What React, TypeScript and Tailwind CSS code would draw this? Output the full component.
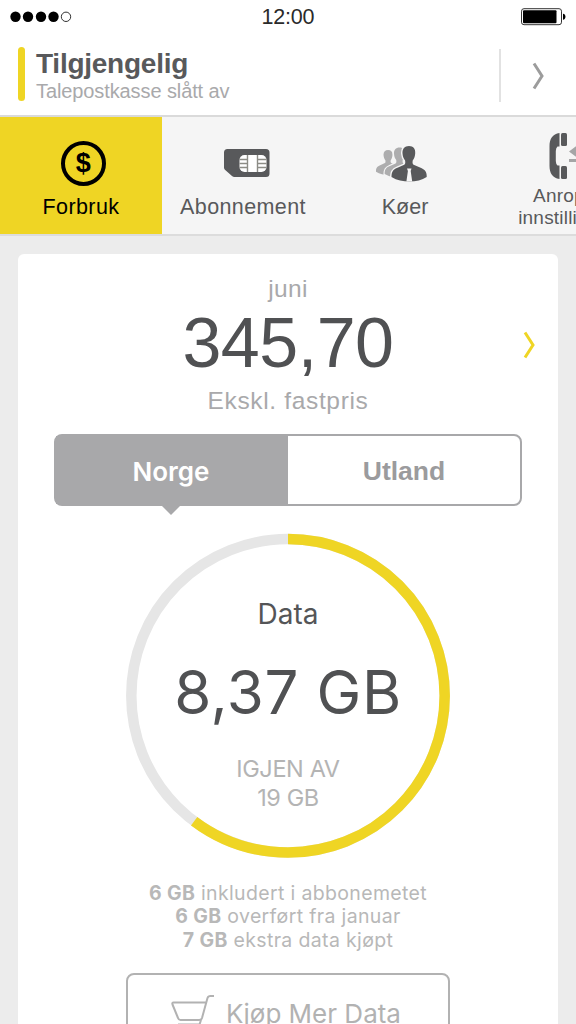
/* Type Imports */
import type { JSX, ReactNode } from "react";

type Allowance = { amount: string; text: string };

const allowances: Allowance[] = [
  { amount: "6 GB", text: "inkludert i abbonemetet" },
  { amount: "6 GB", text: "overført fra januar" },
  { amount: "7 GB", text: "ekstra data kjøpt" },
];

/*
 * StatusBar
 *
 * Signal dots, clock and battery.
 * */
const StatusBar = (): JSX.Element => {
  return (
    <div className="grid h-[34px] grid-cols-3 items-center pl-[10px] pr-[10px]">
      <svg width="64" height="12" viewBox="0 0 64 12">
        {[5.5, 18, 31, 43.5].map((cx) => (
          <circle key={cx} cx={cx} cy="5.800" r="5.2" fill="#000" />
        ))}
        <circle cx="56" cy="5.800" r="4.7" fill="none" stroke="#333" />
      </svg>
      <span className="text-center text-[21.5px] leading-[34px] tracking-[-0.2px] text-[#2a2a2a]">
        12:00
      </span>
      <svg
        className="justify-self-end"
        width="46"
        height="18"
        viewBox="0 0 46 18"
      >
        <rect x="1.5" y="0.700" width="40" height="16" rx="2.5" fill="none" stroke="#333" />
        <rect x="3" y="2.200" width="33.5" height="13" rx="1" fill="#000" />
        <path d="M43 5.700c1.600 0 2.500 1.500 2.500 3s-.9 3-2.500 3z" fill="#000" />
      </svg>
    </div>
  );
};

/*
 * Chevron
 *
 * @param {string} className - The stroke colour and spacing classes.
 * */
const Chevron = ({ className }: { className: string }): JSX.Element => {
  return (
    <svg
      className={className}
      width="14"
      height="28"
      viewBox="0 0 14 28"
      fill="none"
      stroke="currentColor"
      strokeWidth="3"
    >
      <path d="M2 1.500 10 14 2 26.500" />
    </svg>
  );
};

const Header = (): JSX.Element => {
  return (
    <header className="flex h-[83px] border-b-2 border-[#dadada]">
      <div className="mt-[13px] ml-[18px] h-[54px] w-[7px] rounded-full bg-[#efd524]" />
      <div className="ml-[11px] flex-1 pt-[15px]">
        <h1 className="text-[28px] leading-[30px] font-bold tracking-[-0.25px] text-[#58595b]">
          Tilgjengelig
        </h1>
        <p className="mt-[-1px] text-[20px] leading-[26px] tracking-[-0.1px] text-[#a9a9ab]">
          Talepostkasse slått av
        </p>
      </div>
      <div className="mt-[15px] flex h-[53px] w-[77px] items-center justify-center border-l-2 border-[#e2e2e2]">
        <Chevron className="text-[#9c9c9c]" />
      </div>
    </header>
  );
};

/* Icons */
const CoinIcon = (): JSX.Element => {
  return (
    <div className="ml-[5px] flex size-[45px] items-center justify-center rounded-full border-[4.5px] border-black text-[27px] leading-none font-bold">
      $
    </div>
  );
};

const SimIcon = (): JSX.Element => {
  return (
    <svg className="ml-[7px]" width="46" height="28" viewBox="0 0 46 28">
      <path
        d="M3.500 0h38.500a3.500 3.500 0 0 1 3.500 3.500v21a3.500 3.500 0 0 1-3.500 3.500H10.500Q9 28 8 27L1.200 21Q0 20 0 18.500v-15A3.500 3.500 0 0 1 3.500 0z"
        fill="#58595b"
      />
      <rect x="15.500" y="6" width="27" height="17" rx="5" fill="#fff" />
      <path
        d="M23.500 6v17M33.500 6v17M15.500 10.500h8M15.500 14.500h8M15.500 18.500h8M33.500 10.500h9M33.500 14.500h9M33.500 18.500h9"
        stroke="#8c8c86"
        strokeWidth="1.400"
      />
    </svg>
  );
};

const person =
  "M33 1c4.500 0 6.700 3 6.200 7.500-.3 3.500-1 5-2.500 7-.4 2.500-.1 3.800 1.500 4.600l7 3c3.800 1.600 5.800 4.400 5.500 8.900C46 35 40 36.500 33.500 36.500S21 35.500 15.500 32c-.1-5 1.900-7.500 5.400-8.900l6.800-3c1.600-.8 1.800-2.100 1.400-4.600-1.500-2-2.300-3.500-2.600-7C26.100 4 28.500 1 33 1z";

/* Two grey people standing behind a dark one, each cut out with a light edge */
const QueueIcon = (): JSX.Element => {
  return (
    <svg
      className="mt-[1px] ml-[-6px]"
      width="52"
      height="38"
      viewBox="0 0 52 38"
      stroke="#f5f5f5"
      strokeWidth="3"
      paintOrder="stroke"
    >
      <path d={person} fill="#adadae" transform="translate(-11 4.300) scale(.7)" />
      <path d={person} fill="#adadae" transform="translate(-4.500 1.700) scale(.85)" />
      <path d={person} fill="#58595b" />
      <path
        d="M31 23.500h4.500l-.8 2.500L36.200 36.500h-5.800l1.500-10.500z"
        fill="#f5f5f5"
        stroke="none"
      />
    </svg>
  );
};

const CallIcon = (): JSX.Element => {
  return (
    <svg className="mt-[-14px] shrink-0" width="36" height="46" viewBox="0 0 36 46">
      <g fill="#58595b">
        <path d="M10.500 0v13.500H8.500Q7 14.500 6.800 18v10q.2 3.500 1.700 4.500h2V46C3.500 45 .5 40 .5 33V13C.5 6 3.500 1 10.500 0z" />
        <rect x="12" y="0" width="6" height="13" rx="1.500" />
        <rect x="12" y="33" width="6" height="13" rx="1.500" />
      </g>
      <path d="M20 18.500 30 11v5h6v5h-6v5zM20 26h16v3H20z" fill="#a5a5a6" />
    </svg>
  );
};

/*
 * Tab
 *
 * One entry in the horizontally scrolled tab strip.
 *
 * @param {ReactNode} icon - The drawing above the label.
 * @param {boolean} active - Whether the tab is the selected one.
 * */
const Tab = ({
  icon,
  active = false,
  children,
}: {
  icon: ReactNode;
  active?: boolean;
  children: ReactNode;
}): JSX.Element => {
  return (
    <button
      className={`flex w-[162px] shrink-0 flex-col items-center pt-[23px] text-[21.5px] leading-[28px] tracking-[0.4px] ${
        active ? "bg-[#efd524] text-black" : "text-[#58595b]"
      }`}
    >
      <span className="flex h-[46px] items-center">{icon}</span>
      {children}
    </button>
  );
};

const Tabs = (): JSX.Element => {
  return (
    <nav className="flex h-[119px] overflow-hidden border-b-2 border-[#dcdcdc] bg-[#f5f5f5]">
      <Tab icon={<CoinIcon />} active>
        <span className="mt-[7px]">Forbruk</span>
      </Tab>
      <Tab icon={<SimIcon />}>
        <span className="mt-[7px]">Abonnement</span>
      </Tab>
      <Tab icon={<QueueIcon />}>
        <span className="mt-[7px] tracking-normal">Køer</span>
      </Tab>
      <Tab icon={<CallIcon />}>
        <span className="mt-[-1px] text-center text-[19px] leading-[22px] tracking-[0.2px]">
          Anrops-
          <br />
          innstillinger
        </span>
      </Tab>
    </nav>
  );
};

/*
 * UsageRing
 *
 * Circular gauge with the remaining data in the middle.
 *
 * @param {number} share - The filled part of the ring, from 0 to 1.
 * */
const UsageRing = ({ share }: { share: number }): JSX.Element => {
  const length = 2 * Math.PI * 156.7;

  return (
    <div className="mt-[27px] grid h-[325px] w-[324px] font-['Inter',sans-serif]">
      <svg
        className="col-start-1 row-start-1"
        width="324"
        height="325"
        viewBox="0 0 324 325"
        fill="none"
        strokeWidth="10.500"
      >
        <circle cx="162" cy="162.800" r="156.700" stroke="#e6e6e6" />
        <circle
          cx="162"
          cy="162.800"
          r="156.700"
          stroke="#efd524"
          strokeDasharray={`${length * share} ${length}`}
          transform="rotate(-90 162 162.800)"
        />
      </svg>
      <div className="col-start-1 row-start-1 flex flex-col items-center pt-[61px]">
        <span className="text-[28px] leading-[40px] text-[#545557]">Data</span>
        <span className="text-[60px] leading-[116px] tracking-[0.6px] text-[#505153]">
          8,37 GB
        </span>
        <span className="mt-1 text-center text-[23.5px] leading-[29px] tracking-[-0.4px] text-[#b4b4b4]">
          IGJEN AV
          <br />
          19 GB
        </span>
      </div>
    </div>
  );
};

const CartIcon = (): JSX.Element => {
  return (
    <svg
      width="44"
      height="40"
      viewBox="0 0 44 40"
      fill="none"
      stroke="#b2b2b2"
      strokeWidth="2"
      strokeLinejoin="round"
    >
      <path d="M43 2h-3.500c-1.500 0-2.500.5-3 2L31 24c-.5 1.500-1.500 2-3 2H9.500c-1.500 0-2-.5-2.500-2L1.500 10.500C1 9 1.500 8.500 2.500 8.500H35" />
      <path d="M30 26l-1.500 4.500H7" />
      <circle cx="10" cy="36" r="2.500" />
      <circle cx="25" cy="36" r="2.500" />
    </svg>
  );
};

export default function App(): JSX.Element {
  return (
    <div className="flex h-screen w-[576px] flex-col overflow-hidden bg-[#ececec] font-['Liberation_Sans',Arial,sans-serif]">
      <div className="shrink-0 bg-white">
        <StatusBar />
        <Header />
        <Tabs />
      </div>

      <main className="mx-[18px] mt-[18px] flex shrink-0 flex-col items-center rounded-t-md bg-white pt-[21px] pb-10">
        <p className="text-[24.5px] leading-[28px] tracking-[0.4px] text-[#a9a9ab]">
          juni
        </p>
        <div className="grid w-full grid-cols-[1fr_auto_1fr] items-center">
          <span className="col-start-2 text-[70px] leading-[80px] tracking-[-0.5px] text-[#505153]">
            345,70
          </span>
          <Chevron className="mt-[3px] mr-[21px] justify-self-end text-[#efd524]" />
        </div>
        <p className="text-[24.5px] leading-[35px] tracking-[0.65px] text-[#a9a9ab]">
          Ekskl. fastpris
        </p>

        {/* Region switch */}
        <div className="mt-4 flex h-[72px] w-[468px] rounded-lg border-2 border-[#a8a8aa] text-[26px] font-bold">
          <button className="relative w-1/2 bg-[#a8a8aa] pt-[2px] pr-[2px] font-['Inter',sans-serif] font-semibold text-white">
            Norge
            <svg
              className="absolute top-full left-1/2 -ml-[10px]"
              width="18"
              height="11"
              viewBox="0 0 18 11"
            >
              <path d="M0 0h18v2L9 11 0 2z" fill="#a8a8aa" />
            </svg>
          </button>
          <button className="w-1/2 pt-[3px] text-[26.5px] text-[#9b9b9d]">
            Utland
          </button>
        </div>

        <UsageRing share={0.602} />

        {/* Where the allowance comes from */}
        <ul className="mt-6 text-center font-['Inter',sans-serif] text-[19.5px] leading-[23.3px] tracking-[0.35px] text-[#b8b8b8]">
          {allowances.map((item) => (
            <li key={item.text}>
              <span className="font-bold">{item.amount}</span> {item.text}
            </li>
          ))}
        </ul>

        <button className="mt-[21px] flex h-[82px] w-[324px] items-center justify-center gap-[11px] rounded-lg border-2 border-[#b2b2b2] pr-[4px] font-['Inter',sans-serif] text-[26px] text-[#b2b2b2]">
          <CartIcon />
          Kjøp Mer Data
        </button>
      </main>
    </div>
  );
}
